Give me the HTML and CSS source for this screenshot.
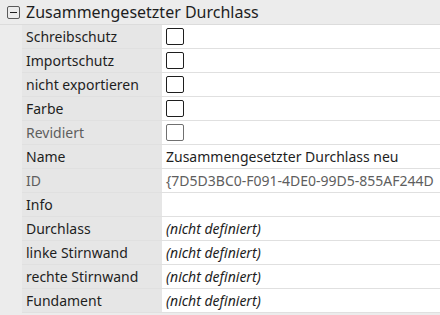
FILE: index.html
```html
<!DOCTYPE html>
<html lang="de">
<head>
  <meta charset="UTF-8">
  <title>Eigenschaften</title>
  <link rel="stylesheet" href="styles.css">
</head>
<body>
  <div class="grid">
    <div class="cat">
      <span class="toggle"></span>
      <span class="cat-title">Zusammengesetzter Durchlass</span>
    </div>
    <div class="rows">
      <div class="row"><div class="label">Schreibschutz</div><div class="value"><span class="check"></span></div></div>
      <div class="row"><div class="label">Importschutz</div><div class="value"><span class="check"></span></div></div>
      <div class="row"><div class="label">nicht exportieren</div><div class="value"><span class="check"></span></div></div>
      <div class="row"><div class="label">Farbe</div><div class="value"><span class="check"></span></div></div>
      <div class="row"><div class="label muted">Revidiert</div><div class="value"><span class="check off"></span></div></div>
      <div class="row"><div class="label">Name</div><div class="value">Zusammengesetzter Durchlass neu</div></div>
      <div class="row"><div class="label muted">ID</div><div class="value muted">{7D5D3BC0-F091-4DE0-99D5-855AF244D</div></div>
      <div class="row"><div class="label">Info</div><div class="value"></div></div>
      <div class="row"><div class="label">Durchlass</div><div class="value undef">(nicht definiert)</div></div>
      <div class="row"><div class="label">linke Stirnwand</div><div class="value undef">(nicht definiert)</div></div>
      <div class="row"><div class="label">rechte Stirnwand</div><div class="value undef">(nicht definiert)</div></div>
      <div class="row"><div class="label">Fundament</div><div class="value undef">(nicht definiert)</div></div>
    </div>
  </div>
</body>
</html>
```
FILE: styles.css
```css
* {
  box-sizing: border-box;
  margin: 0;
  padding: 0;
}
body {
  font-family: "Noto Sans", "Open Sans", sans-serif;
  font-size: 14px;
  color: #1e1e1e;
  background: #ececec;
  width: 440px;
  height: 315px;
  overflow: hidden;
}
.cat {
  display: flex;
  align-items: center;
  height: 25px;
  padding-left: 7px;
  border-bottom: 1px solid #dcdcdc;
}
.cat-title {
  font-size: 16px;
}
.toggle {
  position: relative;
  width: 13px;
  height: 13px;
  border: 1px solid #5a5a5a;
  border-radius: 2px;
  margin-right: 6px;
}
.toggle::after {
  content: "";
  position: absolute;
  left: 2px;
  right: 2px;
  top: 5px;
  height: 1px;
  background: #1e1e1e;
}
.rows {
  padding-left: 22px;
}
.row {
  display: grid;
  grid-template-columns: 140px 1fr;
  height: 24px;
  border-bottom: 1px solid #e0e0e0;
}
.label {
  background: #e6e6e6;
  padding-left: 4px;
  line-height: 23px;
  white-space: nowrap;
}
.value {
  background: #fff;
  padding-left: 4px;
  line-height: 23px;
  white-space: nowrap;
  overflow: hidden;
  display: flex;
  align-items: center;
}
.muted {
  color: #5e5e5e;
}
.undef {
  font-style: italic;
}
.check {
  width: 18px;
  height: 17px;
  border: 1px solid #1e1e1e;
  border-radius: 2px;
  background: #fff;
}
.check.off {
  border-color: #707070;
}
```
